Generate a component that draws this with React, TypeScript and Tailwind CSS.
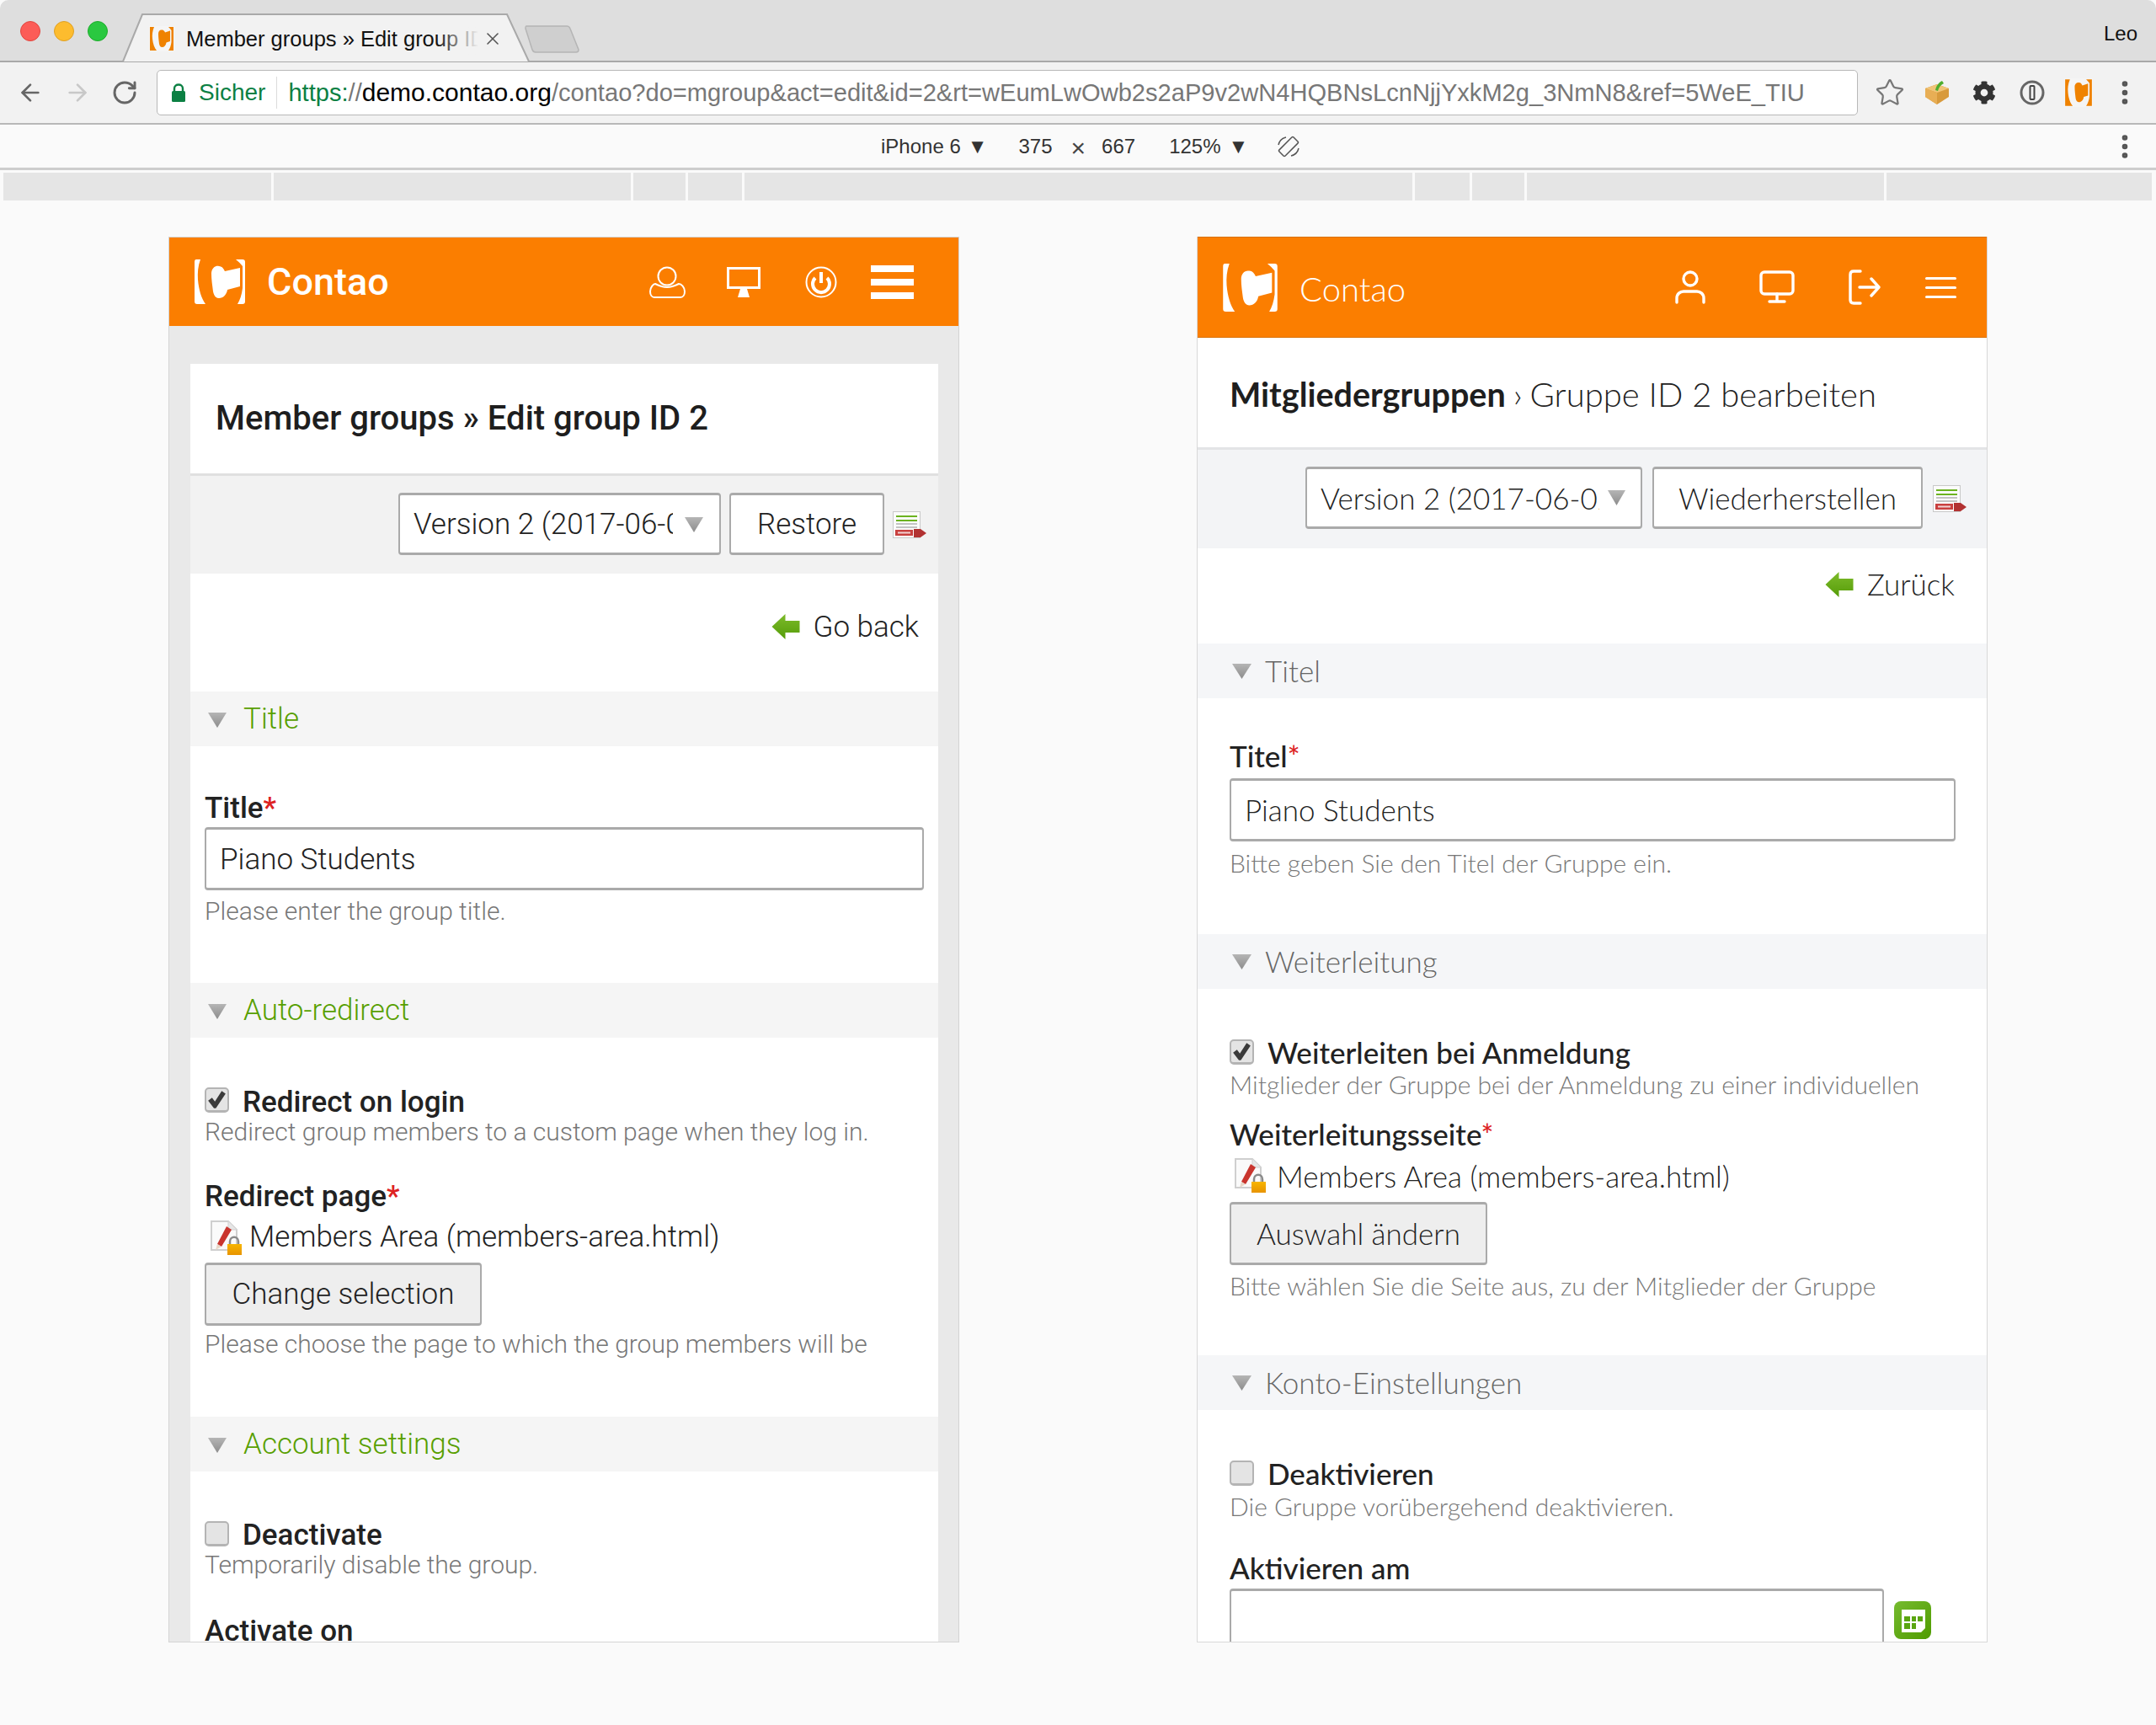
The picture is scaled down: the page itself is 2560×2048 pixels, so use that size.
import React from "react";
import { ArrowLeft, ArrowRight, RotateCw, Star, EllipsisVertical, X } from "lucide-react";
import { FaCog } from "react-icons/fa";

function ContaoLogo({ className }: { className: string }) {
  return (
    <svg viewBox="0 0 60 53" className={className} fill="currentColor">
      <path d="M2 0H7C4 8 3.5 16 4 24C5 36 8 46 13 53H3Q0 53 0 50V3Q0 0 2 0Z" />
      <path d="M49 0H57Q60 0 60 3V50Q60 53 57 53H51C54 48 56 42 57 34V8Q54 4 49 0Z" />
      <path d="M20 17C20 11 24 7 29 8C33 8 35 12 36 14L54 10V32L39 36C38 42 34 46 29 46C25 46 23 43 22 38C21 30 20 24 20 17Z" />
    </svg>
  );
}

function Favicon({ className }: { className: string }) {
  return (
    <svg viewBox="0 0 60 60" className={className}>
      <rect width="60" height="60" fill="#f5f5f5" />
      <path d="M2 2H12C8 12 7 20 8 30C9 42 13 52 18 58H2Z" fill="#ef8200" />
      <path d="M46 2H58V58H46C50 52 52 46 53 38V10Q50 6 46 2Z" fill="#ef8200" />
      <path d="M22 18C22 12 26 8 31 9C35 9 37 13 38 15L50 11V36L41 39C40 46 36 50 31 50C27 50 25 47 24 42C23 33 22 26 22 18Z" fill="#ef8200" />
    </svg>
  );
}

function Triangle({ className }: { className: string }) {
  return (
    <svg viewBox="0 0 20 18" className={className} preserveAspectRatio="none">
      <defs>
        <linearGradient id="tri" x1="0" y1="0" x2="0" y2="1">
          <stop offset="0" stopColor="#b5b5b5" />
          <stop offset="1" stopColor="#8c8c8c" />
        </linearGradient>
      </defs>
      <path d="M0 0H20L10 18Z" fill="url(#tri)" />
    </svg>
  );
}

function DiffIcon({ className }: { className: string }) {
  return (
    <svg viewBox="0 0 40 34" className={className}>
      <rect x="0.5" y="0.5" width="32" height="31" fill="#fbfbfb" stroke="#c9c9c9" />
      <rect x="4" y="5" width="25" height="2" fill="#6cb320" />
      <rect x="4" y="10" width="25" height="2" fill="#6cb320" />
      <rect x="4" y="14" width="25" height="2" fill="#c4c4c4" />
      <rect x="4" y="18" width="25" height="2" fill="#c4c4c4" />
      <rect x="3" y="22" width="21" height="7" fill="#c9403f" />
      <rect x="6" y="24.5" width="15" height="2" fill="#f2d2d2" />
      <path d="M25 21H33L40 26L33 31H25Z" fill="#b23232" />
    </svg>
  );
}

function BackArrow({ className }: { className: string }) {
  return (
    <svg viewBox="0 0 33 30" className={className}>
      <defs>
        <linearGradient id="back" x1="0" y1="0" x2="0" y2="1">
          <stop offset="0" stopColor="#7dbb2b" />
          <stop offset="1" stopColor="#559c08" />
        </linearGradient>
      </defs>
      <path d="M0 15L16 0V8H33V22H16V30Z" fill="url(#back)" />
    </svg>
  );
}

function PageIcon({ className }: { className: string }) {
  return (
    <svg viewBox="0 0 38 42" className={className}>
      <defs>
        <linearGradient id="lock" x1="0" y1="0" x2="0" y2="1">
          <stop offset="0" stopColor="#f7b500" />
          <stop offset="1" stopColor="#e89400" />
        </linearGradient>
      </defs>
      <path d="M1 1H21L31 11V35H1Z" fill="#fafafa" stroke="#cfcfcf" strokeWidth="2" />
      <path d="M21 1V11H31" fill="#e6e6e6" stroke="#cfcfcf" />
      <path d="M19 7L25 11L13 31L8 28Z" fill="#c9352e" />
      <path d="M8 28L13 31L6 35Z" fill="#e8d8c8" />
      <path d="M23 28V25C23 18 33 18 33 25V28" fill="none" stroke="#8a8a8a" strokeWidth="2.5" />
      <rect x="20" y="28" width="17" height="13" fill="url(#lock)" />
    </svg>
  );
}

function Checkbox({ checked, className }: { checked?: boolean; className?: string }) {
  return (
    <div className={`flex h-[30px] w-[29px] shrink-0 items-center justify-center rounded-[5px] border-2 border-b-[3px] border-[#b4b4b4] bg-[#e4e4e4] ${className ?? ""}`}>
      {checked && (
        <svg viewBox="0 0 20 20" className="h-[23px] w-[23px]">
          <path d="M1 11L5 8L8 12L15 1L19 4L9 19H7Z" fill="#3b3b3b" />
        </svg>
      )}
    </div>
  );
}

function TabStrip() {
  return (
    <div className="flex h-[74px] items-end rounded-t-[10px] border-b-2 border-[#a9a9a9] bg-[#dedede] font-['Liberation_Sans',sans-serif]">
      <div className="mb-[20px] ml-[24px] flex w-[116px] gap-[16px] self-end pb-[3px]">
        <span className="h-[24px] w-[24px] rounded-full border border-[#e2463f] bg-[#fc5c57]" />
        <span className="h-[24px] w-[24px] rounded-full border border-[#dfa023] bg-[#fdbc2e]" />
        <span className="h-[24px] w-[24px] rounded-full border border-[#1dac2b] bg-[#2ac840]" />
      </div>
      <div className="relative mb-[-2px] ml-[5px] flex h-[58px] w-[484px] items-center pl-[32px] pt-[2px]">
        <svg viewBox="0 0 484 58" className="absolute inset-0 h-full w-full">
          <path d="M0 57H1L24 1H457L483 57H484" fill="#f2f2f2" stroke="#a9a9a9" strokeWidth="2" />
        </svg>
        <Favicon className="relative h-[34px] w-[30px]" />
        <span className="relative ml-[14px] w-[347px] overflow-hidden whitespace-nowrap text-[25.5px] text-[#111]">
          Member groups » Edit group ID 2
          <span className="absolute inset-y-0 right-0 w-[50px] bg-gradient-to-r from-transparent to-[#f2f2f2]" />
        </span>
        <X className="relative ml-[5px] h-[24px] w-[24px] text-[#555]" strokeWidth={1.6} />
      </div>
      <svg viewBox="0 0 66 33" className="mb-[9px] ml-[-6px] h-[33px] w-[66px]">
        <path d="M2 1H50Q53 1 54 4L64 29Q64 32 61 32H13Q10 32 9 29L1 4Q1 1 2 1Z" fill="#cfcfcf" stroke="#b5b5b5" strokeWidth="1.5" />
      </svg>
      <span className="mb-[14px] ml-auto mr-[22px] text-[24px] text-[#111]">Leo</span>
    </div>
  );
}

function Toolbar() {
  return (
    <div className="flex h-[74px] items-center border-b-2 border-[#b8b8b8] bg-[#f2f2f2] font-['Liberation_Sans',sans-serif]">
      <ArrowLeft className="ml-[20px] h-[32px] w-[32px] text-[#666]" strokeWidth={2} />
      <ArrowRight className="ml-[24px] h-[32px] w-[32px] text-[#c8c8c8]" strokeWidth={2} />
      <RotateCw className="ml-[24px] h-[32px] w-[32px] text-[#666]" strokeWidth={2.2} />
      <div className="ml-[22px] flex h-[54px] w-[2020px] items-center rounded-[5px] border border-[#b8b8b8] bg-white">
        <svg viewBox="0 0 18 22" className="ml-[16px] h-[22px] w-[18px]">
          <path d="M4 10V6C4 0 14 0 14 6V10" fill="none" stroke="#0b8043" strokeWidth="2.4" />
          <rect x="1" y="9" width="16" height="13" rx="1.5" fill="#0b8043" />
        </svg>
        <span className="ml-[15px] text-[28px] text-[#0b8043]">Sicher</span>
        <span className="ml-[13px] h-[38px] w-px bg-[#dcdcdc]" />
        <span className="ml-[13px] whitespace-nowrap text-[29.1px] text-[#777]">
          <span className="text-[#0b8043]">https:</span>//
          <span className="text-[30px] text-black">demo.contao.org</span>
          /contao?do=mgroup&amp;act=edit&amp;id=2&amp;rt=wEumLwOwb2s2aP9v2wN4HQBNsLcnNjjYxkM2g_3NmN8&amp;ref=5WeE_TIU
        </span>
      </div>
      <Star className="ml-[20px] h-[36px] w-[36px] text-[#777]" strokeWidth={1.5} />
      <svg viewBox="0 0 32 30" className="ml-[22px] h-[32px] w-[32px]">
        <path d="M2 10L16 5L30 10V20L16 29L2 20Z" fill="#d89a3c" />
        <path d="M2 10L16 15L30 10L16 5Z" fill="#f0c478" />
        <path d="M16 15V29L2 20V10Z" fill="#e8ae55" />
        <path d="M14 12C15 7 18 3 22 1L24 4C20 6 18 9 17 13Z" fill="#4fae2e" />
      </svg>
      <FaCog className="ml-[26px] h-[28px] w-[28px] text-[#333]" />
      <svg viewBox="0 0 30 30" className="ml-[28px] h-[30px] w-[30px]">
        <circle cx="15" cy="15" r="13" fill="none" stroke="#666" strokeWidth="3" />
        <rect x="12.5" y="7" width="5" height="16" rx="1" fill="none" stroke="#444" strokeWidth="2" />
      </svg>
      <Favicon className="ml-[23px] h-[34px] w-[34px]" />
      <EllipsisVertical className="ml-[20px] h-[36px] w-[36px] text-[#555]" strokeWidth={2.4} />
    </div>
  );
}

function DeviceBar() {
  return (
    <div className="flex h-[54px] items-center border-b-[3px] border-[#cdcdcd] bg-[#fafafa] font-['Liberation_Sans',sans-serif] text-[24px] text-[#333]">
      <span className="ml-[1046px]">iPhone 6</span>
      <span className="ml-[8px] text-[24px]">▼</span>
      <span className="ml-[37px]">375</span>
      <span className="ml-[22px] mt-[4px] text-[30px] text-[#444]">×</span>
      <span className="ml-[19px]">667</span>
      <span className="ml-[40px]">125%</span>
      <span className="ml-[9px] text-[24px]">▼</span>
      <svg viewBox="0 0 30 28" className="ml-[33px] h-[28px] w-[30px]" fill="none" stroke="#555" strokeWidth="1.5">
        <rect x="10" y="2" width="10" height="24" rx="1.5" transform="rotate(45 15 14)" />
        <path d="M3 12A12 12 0 0 1 12 3M27 16A12 12 0 0 1 18 25" />
      </svg>
      <EllipsisVertical className="ml-auto mr-[19px] h-[36px] w-[36px] text-[#555]" strokeWidth={2.4} />
    </div>
  );
}

const rulerWidths = [318, 424, 62, 64, 793, 65, 62, 424, 315];

function Ruler() {
  return (
    <div className="mt-[3px] flex h-[33px] gap-[3px] pl-[4px]">
      {rulerWidths.map((w, i) => (
        <div key={i} className="bg-[#e5e5e5]" style={{ width: w }} />
      ))}
    </div>
  );
}

function LegendLeft({ title }: { title: string }) {
  return (
    <div className="flex h-[65px] items-center gap-[20px] bg-[#f5f5f5] pl-[21px] pt-[2px] text-[35px] font-light text-[#589f00]">
      <Triangle className="h-[18px] w-[22px]" />
      {title}
    </div>
  );
}

function LegendRight({ title }: { title: string }) {
  return (
    <div className="flex h-[65px] items-center gap-[16px] bg-[#f5f6f8] pl-[41px] text-[35px] font-light text-[#666]">
      <Triangle className="h-[18px] w-[23px]" />
      {title}
    </div>
  );
}

function RobotoPhone() {
  return (
    <div className="h-[1669px] w-[939px] overflow-hidden border border-[#d4d4d4] bg-[#e9e9e9] font-['Roboto',sans-serif] text-[#222]">
      <div className="flex h-[105px] items-center bg-[#fb7e00] text-white">
        <ContaoLogo className="ml-[30px] h-[53px] w-[60px]" />
        <span className="ml-[26px] text-[45px] font-medium">Contao</span>
        <svg viewBox="0 0 44 38" className="ml-[308px] h-[38px] w-[44px]" fill="none" stroke="white" strokeWidth="2">
          <circle cx="22" cy="12" r="10.5" />
          <path d="M2 30C2 25 6 21 8 21C12 23 16 25 22 25C28 25 32 23 36 21C39 21 43 25 43 30C43 34 41 37 38 37H7C4 37 2 34 2 30Z" />
        </svg>
        <svg viewBox="0 0 40 36" className="ml-[49px] h-[36px] w-[40px]" fill="none">
          <rect x="1.5" y="1.5" width="37" height="23" stroke="white" strokeWidth="3" />
          <path d="M16 26H24L27 36H13Z" fill="white" />
        </svg>
        <svg viewBox="0 0 38 38" className="ml-[53px] h-[38px] w-[38px]" fill="none" stroke="white">
          <circle cx="19" cy="19" r="17.5" strokeWidth="2" />
          <path d="M12 14A10 10 0 1 0 26 14" strokeWidth="4" />
          <path d="M19 7V20" strokeWidth="4" />
        </svg>
        <div className="ml-[40px] flex w-[51px] flex-col gap-[8px]">
          <div className="h-[8px] bg-white" />
          <div className="h-[8px] bg-white" />
          <div className="h-[8px] bg-white" />
        </div>
      </div>
      <div className="ml-[25px] mr-[24px] mt-[45px] bg-white">
        <div className="flex h-[133px] items-center border-b-[3px] border-[#e0e0e0] pl-[30px] text-[40px] font-medium text-[#1e1e1e]">
          Member groups » Edit group ID 2
        </div>
        <div className="flex h-[116px] justify-end gap-[10px] bg-[#f2f2f2] pr-[14px] pt-[20px] text-[35px] font-light">
          <div className="flex h-[74px] w-[383px] items-center rounded-[4px] border-2 border-y-[3px] border-[#aaa] bg-white pl-[16px] pt-[2px]">
            <span className="w-[308px] overflow-hidden whitespace-nowrap">Version 2 (2017-06-02)</span>
            <Triangle className="ml-[14px] h-[18px] w-[22px]" />
          </div>
          <div className="flex h-[74px] w-[184px] items-center justify-center rounded-[4px] border-2 border-y-[3px] border-[#aaa] bg-white pt-[2px]">
            Restore
          </div>
          <DiffIcon className="mt-[22px] h-[34px] w-[40px]" />
        </div>
        <div className="flex h-[140px] justify-end gap-[16px] pr-[23px] pt-[40px] text-[35px] font-light">
          <BackArrow className="mt-[8px] h-[30px] w-[34px]" />
          <span className="leading-[48px]">Go back</span>
        </div>

        <LegendLeft title="Title" />
        <div className="px-[17px]">
          <div className="mt-[48px] h-[48px] pt-[2px] text-[35px] font-medium leading-[48px]">
            Title<span className="text-[#d22]">*</span>
          </div>
          <div className="flex h-[75px] items-center rounded-[4px] border-2 border-y-[3px] border-[#aaa] pl-[16px] pt-[3px] text-[35px] font-light">
            Piano Students
          </div>
          <div className="mt-[5px] text-[30px] font-light leading-[40px] text-[#777]">Please enter the group title.</div>
        </div>
        <div className="mt-[65px]">
          <LegendLeft title="Auto-redirect" />
        </div>
        <div className="px-[17px]">
          <div className="mt-[58px] flex h-[36px] items-center gap-[16px] pt-[3px] text-[35px] font-medium">
            <Checkbox checked className="mb-[7px]" />
            Redirect on login
          </div>
          <div className="h-[36px] text-[30px] font-light leading-[36px] text-[#777]">
            Redirect group members to a custom page when they log in.
          </div>
          <div className="mt-[35px] h-[44px] pt-[2px] text-[35px] font-medium leading-[44px]">
            Redirect page<span className="text-[#d22]">*</span>
          </div>
          <div className="mt-[2px] flex h-[50px] items-center gap-[8px] pt-[3px] text-[35px] font-light">
            <PageIcon className="ml-[7px] h-[42px] w-[38px]" />
            Members Area (members-area.html)
          </div>
          <div className="mt-[6px] flex h-[75px] w-[329px] items-center justify-center rounded-[4px] border-2 border-y-[3px] border-[#aaa] bg-[#eee] pt-[2px] text-[35px] font-light">
            Change selection
          </div>
          <div className="mt-[4px] h-[36px] overflow-hidden whitespace-nowrap text-[30px] font-light leading-[36px] text-[#777]">
            Please choose the page to which the group members will be
          </div>
        </div>
        <div className="mt-[68px]">
          <LegendLeft title="Account settings" />
        </div>
        <div className="px-[17px]">
          <div className="mt-[57px] flex h-[36px] items-center gap-[16px] pt-[3px] text-[35px] font-medium">
            <Checkbox className="mb-[5px]" />
            Deactivate
          </div>
          <div className="h-[36px] text-[30px] font-light leading-[36px] text-[#777]">Temporarily disable the group.</div>
          <div className="mt-[37px] h-[44px] pt-[2px] text-[35px] font-medium leading-[44px]">Activate on</div>
        </div>
      </div>
    </div>
  );
}

function LatoPhone() {
  return (
    <div className="h-[1669px] w-[939px] overflow-hidden border-x border-b border-[#d8d8d8] bg-white font-['Lato',sans-serif] text-[#222]">
      <div className="flex h-[120px] items-center border-y border-[#d97000] bg-[#fb7e00] text-white">
        <ContaoLogo className="ml-[30px] h-[57px] w-[65px]" />
        <span className="ml-[26px] pt-[3px] text-[40px] font-light">Contao</span>
        <svg viewBox="0 0 36 40" className="ml-[320px] h-[40px] w-[36px]" fill="none" stroke="white" strokeWidth="3.4" strokeLinecap="round">
          <circle cx="18" cy="10" r="8" />
          <path d="M2 38V33C2 28 6 25 10 25H26C30 25 34 28 34 33V38" />
        </svg>
        <svg viewBox="0 0 42 40" className="ml-[64px] h-[40px] w-[42px]" fill="none" stroke="white" strokeWidth="3.4" strokeLinecap="round">
          <rect x="2" y="2" width="38" height="26" rx="4" />
          <path d="M21 28V37M12 37H30" />
        </svg>
        <svg viewBox="0 0 38 42" className="ml-[64px] h-[42px] w-[38px]" fill="none" stroke="white" strokeWidth="3.4" strokeLinecap="round" strokeLinejoin="round">
          <path d="M14 2H6Q2 2 2 6V36Q2 40 6 40H14" />
          <path d="M13 21H36M27 11L36 21L27 31" />
        </svg>
        <div className="ml-[53px] flex w-[37px] flex-col gap-[8px]">
          <div className="h-[3px] rounded-full bg-white" />
          <div className="h-[3px] rounded-full bg-white" />
          <div className="h-[3px] rounded-full bg-white" />
        </div>
      </div>
      <div className="flex h-[133px] items-center border-b-[3px] border-[#e3e4e6] pl-[38px] pt-[3px] text-[40px] font-light">
        <span className="text-[39.5px] font-bold text-[#1e1e1e]">Mitgliedergruppen</span>
        <span className="ml-[9px] text-[#222]">›</span>
        <span className="ml-[9px]">Gruppe ID 2 bearbeiten</span>
      </div>
      <div className="flex h-[117px] justify-end gap-[12px] bg-[#f3f4f6] pr-[24px] pt-[20px] text-[35px] font-light">
        <div className="flex h-[74px] w-[400px] items-center rounded-[4px] border-2 border-y-[3px] border-[#aaa] bg-white pl-[16px]">
          <span className="w-[331px] overflow-hidden whitespace-nowrap">Version 2 (2017-06-02)</span>
          <Triangle className="ml-[10px] h-[18px] w-[21px]" />
        </div>
        <div className="flex h-[74px] w-[321px] items-center justify-center rounded-[4px] border-2 border-y-[3px] border-[#aaa] bg-white">
          Wiederherstellen
        </div>
        <DiffIcon className="mt-[22px] h-[34px] w-[40px]" />
      </div>
      <div className="flex h-[113px] justify-end gap-[16px] pr-[38px] pt-[18px] text-[35px] font-light">
        <BackArrow className="mt-[10px] h-[30px] w-[34px]" />
        <span className="leading-[48px]">Zurück</span>
      </div>

      <LegendRight title="Titel" />
      <div className="pl-[38px] pr-[37px]">
        <div className="mt-[46px] text-[35px] font-medium leading-[44px]">
          Titel<span className="text-[#d22]">*</span>
        </div>
        <div className="mt-[5px] flex h-[75px] items-center rounded-[4px] border-2 border-y-[3px] border-[#aaa] pl-[16px] text-[35px] font-light">
          Piano Students
        </div>
        <div className="mt-[7px] h-[36px] text-[30px] font-light leading-[36px] text-[#777]">
          Bitte geben Sie den Titel der Gruppe ein.
        </div>
      </div>
      <div className="mt-[67px]">
        <LegendRight title="Weiterleitung" />
      </div>
      <div className="px-[38px]">
        <div className="mt-[57px] flex h-[36px] items-center gap-[16px] text-[35px] font-medium">
          <Checkbox checked />
          Weiterleiten bei Anmeldung
        </div>
        <div className="mt-[2px] h-[36px] whitespace-nowrap text-[30px] font-light leading-[36px] text-[#777]">
          Mitglieder der Gruppe bei der Anmeldung zu einer individuellen
        </div>
        <div className="mt-[19px] text-[35px] font-medium leading-[44px]">
          Weiterleitungsseite<span className="text-[#d22]">*</span>
        </div>
        <div className="mt-[6px] flex h-[44px] items-center gap-[12px] text-[35px] font-light">
          <PageIcon className="ml-[6px] h-[42px] w-[38px]" />
          Members Area (members-area.html)
        </div>
        <div className="mt-[9px] flex h-[75px] w-[306px] items-center justify-center rounded-[4px] border-2 border-y-[3px] border-[#aaa] bg-[#eee] text-[35px] font-light">
          Auswahl ändern
        </div>
        <div className="mt-[6px] h-[36px] whitespace-nowrap text-[30px] font-light leading-[36px] text-[#777]">
          Bitte wählen Sie die Seite aus, zu der Mitglieder der Gruppe
        </div>
      </div>
      <div className="mt-[65px]">
        <LegendRight title="Konto-Einstellungen" />
      </div>
      <div className="px-[38px]">
        <div className="mt-[57px] flex h-[36px] items-center gap-[16px] text-[35px] font-medium">
          <Checkbox />
          Deaktivieren
        </div>
        <div className="mt-[3px] h-[36px] text-[30px] font-light leading-[36px] text-[#777]">
          Die Gruppe vorübergehend deaktivieren.
        </div>
        <div className="mt-[33px] text-[35px] font-medium leading-[44px]">Aktivieren am</div>
        <div className="mt-[3px] flex gap-[12px]">
          <div className="h-[75px] w-[777px] shrink-0 rounded-[4px] border-2 border-y-[3px] border-[#aaa]" />
          <svg viewBox="0 0 44 45" className="mt-[15px] h-[45px] w-[44px] shrink-0">
            <defs>
              <linearGradient id="cal" x1="0" y1="0" x2="1" y2="1">
                <stop offset="0" stopColor="#76bb2f" />
                <stop offset="1" stopColor="#4f9b00" />
              </linearGradient>
            </defs>
            <rect width="44" height="45" rx="8" fill="url(#cal)" />
            <path d="M9 10H37V32L32 37H9Z" fill="white" />
            <path d="M12 18H19V24H12ZM21 18H26V24H21ZM28 18H34V24H28ZM12 26H19V33H12ZM21 26H26V33H21Z" fill="#5aa510" />
          </svg>
        </div>
      </div>
    </div>
  );
}

export default function App() {
  return (
    <div className="h-[2048px] w-[2560px] overflow-hidden bg-[#fafafa]">
      <TabStrip />
      <Toolbar />
      <DeviceBar />
      <Ruler />
      <div className="mt-[43px] flex gap-[282px] pl-[200px]">
        <RobotoPhone />
        <LatoPhone />
      </div>
    </div>
  );
}
